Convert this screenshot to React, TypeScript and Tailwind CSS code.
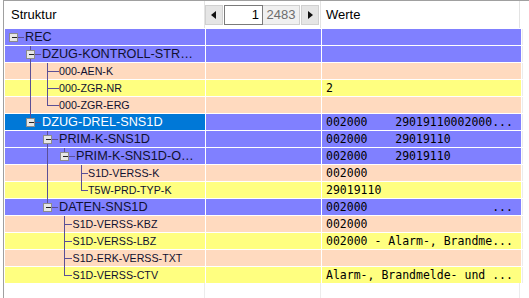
import React from "react";

type Seg = { l: number; k: "full" | "topbox" | "boxbot" | "topmid" };
type Row = {
  label: string;
  level: number;
  exp: boolean;
  bg: "b" | "p" | "y";
  segs: Seg[];
  value: string;
  sel?: boolean;
};

const rows: Row[] = [
  { label: "REC", level: 0, exp: true, bg: "b", segs: [], value: "" },
  { label: "DZUG-KONTROLL-STR\u2026", level: 1, exp: true, bg: "b", segs: [{ l: 1, k: "topbox" }, { l: 1, k: "boxbot" }], value: "" },
  { label: "000-AEN-K", level: 2, exp: false, bg: "p", segs: [{ l: 1, k: "full" }, { l: 2, k: "full" }], value: "" },
  { label: "000-ZGR-NR", level: 2, exp: false, bg: "y", segs: [{ l: 1, k: "full" }, { l: 2, k: "full" }], value: "2" },
  { label: "000-ZGR-ERG", level: 2, exp: false, bg: "p", segs: [{ l: 1, k: "full" }, { l: 2, k: "topmid" }], value: "" },
  { label: "DZUG-DREL-SNS1D", level: 1, exp: true, bg: "b", segs: [{ l: 1, k: "topbox" }], value: "002000    29019110002000...", sel: true },
  { label: "PRIM-K-SNS1D", level: 2, exp: true, bg: "b", segs: [{ l: 2, k: "topbox" }, { l: 2, k: "boxbot" }], value: "002000    29019110" },
  { label: "PRIM-K-SNS1D-O\u2026", level: 3, exp: true, bg: "b", segs: [{ l: 2, k: "full" }, { l: 3, k: "topbox" }], value: "002000    29019110" },
  { label: "S1D-VERSS-K", level: 4, exp: false, bg: "p", segs: [{ l: 2, k: "full" }, { l: 4, k: "full" }], value: "002000" },
  { label: "T5W-PRD-TYP-K", level: 4, exp: false, bg: "y", segs: [{ l: 2, k: "full" }, { l: 4, k: "topmid" }], value: "29019110" },
  { label: "DATEN-SNS1D", level: 2, exp: true, bg: "b", segs: [{ l: 2, k: "topbox" }], value: "002000                  ..." },
  { label: "S1D-VERSS-KBZ", level: 3, exp: false, bg: "p", segs: [{ l: 3, k: "full" }], value: "002000" },
  { label: "S1D-VERSS-LBZ", level: 3, exp: false, bg: "y", segs: [{ l: 3, k: "full" }], value: "002000 - Alarm-, Brandme..." },
  { label: "S1D-ERK-VERSS-TXT", level: 3, exp: false, bg: "p", segs: [{ l: 3, k: "full" }], value: "" },
  { label: "S1D-VERSS-CTV", level: 3, exp: false, bg: "y", segs: [{ l: 3, k: "topmid" }], value: "Alarm-, Brandmelde- und ..." },
];

const bgClass: Record<string, string> = {
  b: "bg-[#8080ff]",
  p: "bg-[#ffdabf]",
  y: "bg-[#ffff80]",
};

const LINE = "#5b4f96";

const lx = (l: number) => 8.5 + 17 * l;
// text start (relative to the cell) for leaves per level
const leafText: Record<number, number> = { 2: 54, 3: 67.5, 4: 83 };
const textX = (r: Row) => (r.exp ? 20 + 17 * r.level : leafText[r.level] ?? 20 + 17 * r.level);

function TreeLines({ row }: { row: Row }) {
  const x = lx(row.level);
  return (
    <svg
      className="absolute left-0 top-0 pointer-events-none"
      width={200}
      height={17}
      shapeRendering="crispEdges"
      style={{ overflow: "visible" }}
    >
      {row.segs.map((s, i) => {
        const sx = lx(s.l);
        let y1 = 0;
        let y2 = 17;
        if (s.k === "topbox") y2 = 4;
        if (s.k === "boxbot") y1 = 13;
        if (s.k === "topmid") y2 = 8.5;
        return <line key={i} x1={sx} x2={sx} y1={y1} y2={y2} stroke={LINE} strokeWidth={1} />;
      })}
      {row.exp ? (
        <>
          <line x1={x + 4.5} x2={x + 10.5} y1={8.5} y2={8.5} stroke={LINE} strokeWidth={1} />
          <rect x={x - 4} y={4.5} width={8} height={8} fill="#e6e6e6" stroke="#8c8c8c" strokeWidth={1} />
          <line x1={x - 2} x2={x + 3} y1={8.5} y2={8.5} stroke="#222" strokeWidth={1} />
        </>
      ) : (
        <line x1={x} x2={textX(row) - 0.5} y1={8.5} y2={8.5} stroke={LINE} strokeWidth={1} />
      )}
    </svg>
  );
}

export default function App() {
  return (
    <div className="w-[529px] h-[298px] bg-white overflow-hidden font-['Liberation_Sans',Arial,sans-serif] pl-[3px]">
      <div className="h-full border-l border-t border-[#a0a0a0] flex flex-col">
        {/* header */}
        <div className="h-[27px] flex items-stretch shrink-0 text-[13px] text-black">
          <div className="w-[201px] pl-[7px] flex items-center border-r border-[#e3e3e3]">Struktur</div>
          <div className="w-[116px] flex items-center border-r border-[#e3e3e3]">
            <div className="w-[18px] h-[20px] bg-[#e5e5e5] border border-[#d0d0d0] flex items-center justify-center">
              <svg width="6" height="8" viewBox="0 0 6 8">
                <path d="M5 0 L0 4 L5 8 Z" fill="#111" />
              </svg>
            </div>
            <div className="ml-[1px] w-[39px] h-[20px] bg-white border border-[#7a7a7a] flex items-center justify-end pr-[3px] text-[13px]">1</div>
            <div className="w-[37px] h-[20px] bg-[#f0f0f0] border-y border-r border-[#cfcfcf] flex items-center justify-center text-[13px] text-[#6d6d6d]">2483</div>
            <div className="ml-[1px] w-[18px] h-[20px] bg-[#e5e5e5] border border-[#d0d0d0] flex items-center justify-center">
              <svg width="6" height="8" viewBox="0 0 6 8">
                <path d="M1 0 L6 4 L1 8 Z" fill="#111" />
              </svg>
            </div>
          </div>
          <div className="w-[199px] pl-[5px] flex items-center border-r border-[#e3e3e3]">Werte</div>
          <div className="flex-1" />
        </div>
        {/* rows */}
        <div className="flex flex-col gap-y-[1px] pt-[1px] pl-[1px]">
          {rows.map((r, i) => (
            <div key={i} className="h-[16px] flex gap-x-[1px]">
              <div
                className={`relative w-[200px] h-full ${r.sel ? "bg-[#0078d7] text-white" : bgClass[r.bg] + " text-[#101030]"}`}
              >
                <TreeLines row={r} />
                <div
                  className={`h-full flex items-center leading-[16px] whitespace-nowrap overflow-hidden ${r.exp ? "text-[12.7px]" : "text-[10.7px]"}`}
                  style={{ paddingLeft: textX(r) }}
                >
                  {r.label}
                </div>
              </div>
              <div className={`w-[115px] h-full ${bgClass[r.bg]}`} />
              <div
                className={`w-[199px] h-full ${bgClass[r.bg]} pl-[4px] flex items-center whitespace-pre overflow-hidden font-['DejaVu_Sans_Mono',monospace] text-[11.5px] leading-[16px] text-black`}
              >
                {r.value}
              </div>
              <div className="flex-1 h-full border-l border-[#ececec]" />
            </div>
          ))}
        </div>
        <div className="flex-1 flex pl-[1px]">
          <div className="w-[200px] border-r border-[#ececec]" />
          <div className="w-[116px] border-r border-[#ececec]" />
          <div className="w-[199px] border-r border-[#ececec]" />
        </div>
      </div>
    </div>
  );
}
